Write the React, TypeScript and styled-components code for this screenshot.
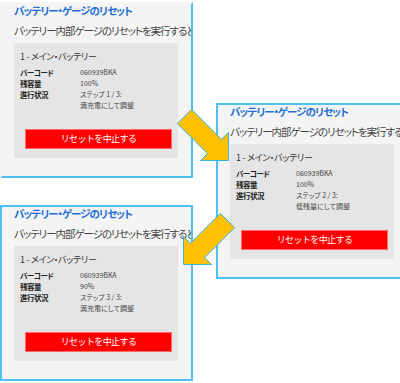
import React from 'react'
import styled, { createGlobalStyle } from 'styled-components'

const GlobalStyle = createGlobalStyle`
  html, body {
    margin: 0;
    padding: 0;
    background: #fff;
  }
  body {
    font-family: 'Noto Sans CJK JP', 'Noto Sans', sans-serif;
    font-feature-settings: 'palt';
  }
`

const Canvas = styled.div`
  position: relative;
  width: 400px;
  height: 383px;
  overflow: hidden;
  background: #fff;
`

const Window = styled.div<{ $x: number; $y: number; $cropped?: boolean }>`
  position: absolute;
  left: ${({ $x }) => $x}px;
  top: ${({ $y }) => $y}px;
  width: 193px;
  height: 176px;
  box-sizing: border-box;
  border: 2px solid #4fc0ef;
  border-top-color: ${({ $cropped }) => ($cropped ? 'transparent' : '#4fc0ef')};
  border-left-color: ${({ $cropped }) => ($cropped ? 'transparent' : '#4fc0ef')};
  background: #f3f4f3;
  padding: 0 0 0 12px;
  overflow: hidden;
`

const Title = styled.div`
  font-size: 10.5px;
  line-height: 14px;
  letter-spacing: -0.9px;
  font-weight: 700;
  color: #1f6fd6;
  white-space: nowrap;
`

const Lead = styled.div`
  margin-top: 5px;
  font-size: 10.5px;
  line-height: 16px;
  letter-spacing: -1.03px;
  color: #444;
  white-space: nowrap;
`

const Card = styled.div`
  margin-top: 4px;
  width: 164px;
  height: 115px;
  box-sizing: border-box;
  background: #e5e5e5;
  padding: 6px 0 9px 6px;
  display: flex;
  flex-direction: column;
`

const CardHeading = styled.div`
  font-size: 9px;
  line-height: 16px;
  letter-spacing: -0.3px;
  color: #333;
  white-space: nowrap;
`

const Details = styled.div`
  margin-top: 1.5px;
  display: grid;
  grid-template-columns: 60px auto;
  font-size: 7px;
  line-height: 11px;
  color: #444;
`

const Label = styled.div`
  font-weight: 700;
  font-size: 7.5px;
  letter-spacing: -0.5px;
  color: #222;
`

const Value = styled.div`
  white-space: pre-line;
`

const StopButton = styled.button`
  margin: auto 0 0 5px;
  width: 147px;
  height: 20px;
  padding: 0;
  border: 1px solid #ff6a6a;
  background: #ff0000;
  color: #fff;
  font-family: inherit;
  font-size: 9px;
  letter-spacing: -0.6px;
  line-height: 18px;
  text-align: center;
`

const Overlay = styled.svg`
  position: absolute;
  left: 0;
  top: 0;
  pointer-events: none;
`

interface ResetWindowProps {
  x: number
  y: number
  cropped?: boolean
  level: string
  step: string
  stage: string
}

function ResetWindow({ x, y, cropped, level, step, stage }: ResetWindowProps) {
  return (
    <Window $x={x} $y={y} $cropped={cropped}>
      <Title>バッテリー・ゲージのリセット</Title>
      <Lead>バッテリー内部ゲージのリセットを実行すると</Lead>
      <Card>
        <CardHeading>1 - メイン・バッテリー</CardHeading>
        <Details>
          <Label>バーコード</Label>
          <Value>060939BKA</Value>
          <Label>残容量</Label>
          <Value>{level}</Value>
          <Label>進行状況</Label>
          <Value>{`ステップ ${step} / 3:\n${stage}`}</Value>
        </Details>
        <StopButton type="button">リセットを中止する</StopButton>
      </Card>
    </Window>
  )
}

export default function App() {
  return (
    <>
      <GlobalStyle />
      <Canvas>
        <ResetWindow x={0} y={2} cropped level="100%" step="1" stage="満充電にして調整" />
        <ResetWindow x={216} y={103} level="100%" step="2" stage="低残量にして調整" />
        <ResetWindow x={0} y={205} level="90%" step="3" stage="満充電にして調整" />
        <Overlay width={400} height={383} viewBox="0 0 400 383">
          <polygon
            points="177.4,123.6 191.6,109.4 221.6,139.4 228.5,132.5 228.5,160.5 200.5,160.5 207.4,153.6"
            fill="#ffc000"
            stroke="#33b5e5"
            strokeWidth={1}
          />
          <polygon
            points="220.4,213.4 234.6,227.6 204.6,257.6 211.5,264.5 183.5,264.5 183.5,236.5 190.4,243.4"
            fill="#ffc000"
            stroke="#33b5e5"
            strokeWidth={1}
          />
        </Overlay>
      </Canvas>
    </>
  )
}
